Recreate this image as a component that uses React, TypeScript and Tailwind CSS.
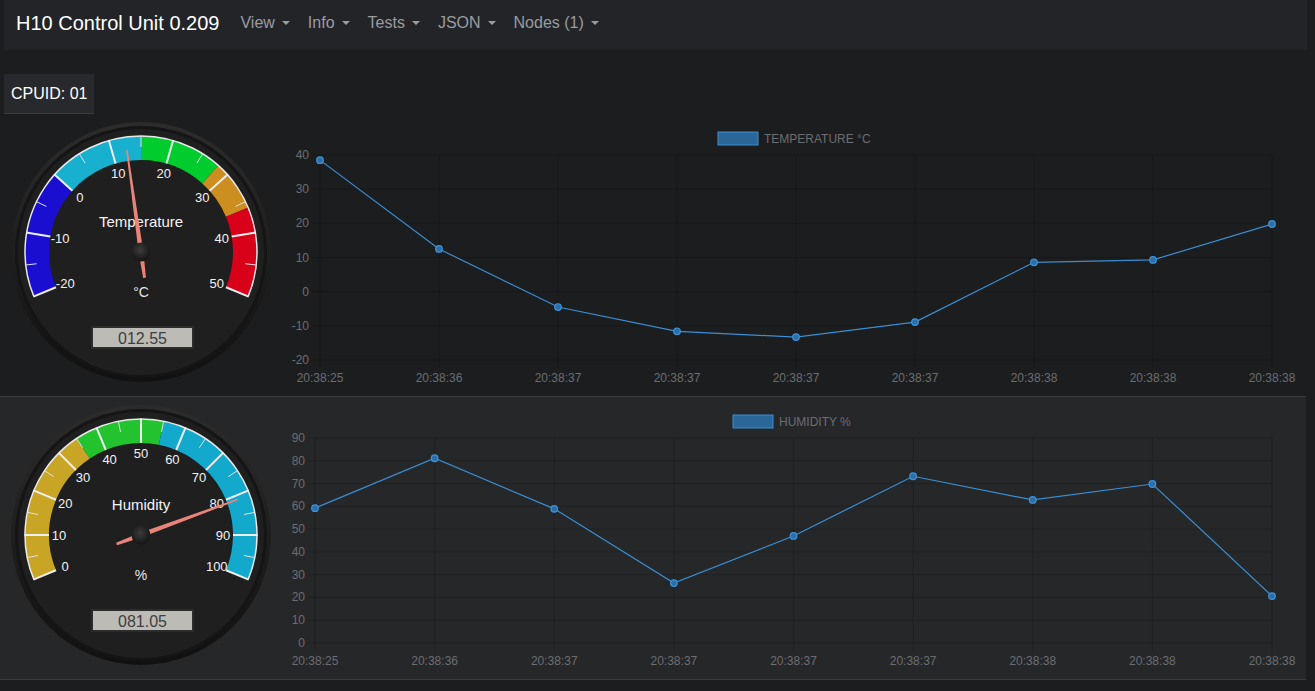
import React from "react";

type Band = { from: number; to: number; color: string };

interface GaugeProps {
  min: number;
  max: number;
  major: number;
  minor: number;
  bands: Band[];
  value: number;
  title: string;
  units: string;
  display: string;
}

const CX = 141;
const CY = 138;

function angleOf(v: number, min: number, max: number) {
  return ((-112.5 + ((v - min) / (max - min)) * 225) * Math.PI) / 180;
}

function pt(a: number, r: number) {
  return [CX + r * Math.sin(a), CY - r * Math.cos(a)];
}

function arcPath(a1: number, a2: number, r: number) {
  const [x1, y1] = pt(a1, r);
  const [x2, y2] = pt(a2, r);
  const large = a2 - a1 > Math.PI ? 1 : 0;
  return `M${x1} ${y1} A${r} ${r} 0 ${large} 1 ${x2} ${y2}`;
}

function Gauge({ min, max, major, minor, bands, value, title, units, display }: GaugeProps) {
  const majors: number[] = [];
  for (let v = min; v <= max + 0.001; v += major) majors.push(v);
  const minors: number[] = [];
  for (let v = min; v <= max + 0.001; v += minor) if (!majors.includes(v)) minors.push(v);

  const na = angleOf(value, min, max);
  const perp = na + Math.PI / 2;
  const side = (a: number, r: number, w: number) => {
    const [x, y] = pt(a, r);
    return [x + w * Math.sin(perp), y - w * Math.cos(perp)];
  };
  const needle = [
    side(na, 103, 0.8),
    side(na, 0, 2.4),
    side(na, -26, 1.4),
    side(na, -26, -1.4),
    side(na, 0, -2.4),
    side(na, 103, -0.8),
  ]
    .map((p) => p.join(","))
    .join(" ");

  return (
    <svg width="280" height="282" className="shrink-0">
      <defs>
        <radialGradient id={`hub-${title}`} cx="45%" cy="40%" r="60%">
          <stop offset="0%" stopColor="#3c3c3c" />
          <stop offset="100%" stopColor="#141414" />
        </radialGradient>
        <linearGradient id={`rim-${title}`} x1="0" y1="0" x2="0" y2="1">
          <stop offset="0%" stopColor="#2c2c2c" />
          <stop offset="100%" stopColor="#111111" />
        </linearGradient>
      </defs>
      <circle cx={CX} cy={CY} r="130" fill={`url(#rim-${title})`} />
      <circle cx={CX} cy={CY} r="126" fill="#151515" />
      <circle cx={CX} cy={CY} r="123" fill="#1f1f1f" />

      {bands.map((b) => (
        <path
          key={b.from}
          d={arcPath(angleOf(b.from, min, max), angleOf(b.to, min, max), 104)}
          stroke={b.color}
          strokeWidth="24"
          fill="none"
        />
      ))}
      <path
        d={arcPath(angleOf(min, min, max), angleOf(max, min, max), 116)}
        stroke="#e8e8e8"
        strokeWidth="1.5"
        fill="none"
      />
      {majors.map((v) => {
        const a = angleOf(v, min, max);
        const [x1, y1] = pt(a, 92);
        const [x2, y2] = pt(a, 116.5);
        return <line key={`M${v}`} x1={x1} y1={y1} x2={x2} y2={y2} stroke="#eeeeee" strokeWidth="2" />;
      })}
      {minors.map((v) => {
        const a = angleOf(v, min, max);
        const [x1, y1] = pt(a, 105);
        const [x2, y2] = pt(a, 116);
        return <line key={`m${v}`} x1={x1} y1={y1} x2={x2} y2={y2} stroke="#e0e0e0" strokeWidth="1" />;
      })}
      {majors.map((v) => {
        const [x, y] = pt(angleOf(v, min, max), 82);
        return (
          <text key={`l${v}`} x={x} y={y + 4.5} textAnchor="middle" fontSize="13" fill="#f2f2f2">
            {v}
          </text>
        );
      })}

      <text x={CX} y={CY - 25} textAnchor="middle" fontSize="15" fill="#f4f4f4">
        {title}
      </text>
      <text x={CX} y={CY + 45} textAnchor="middle" fontSize="14" fill="#e6e6e6">
        {units}
      </text>

      <rect x={CX - 50} y={CY + 74} width="103" height="23" fill="#2c2c2c" />
      <rect x={CX - 48} y={CY + 76} width="99" height="19" fill="#bcbbb6" />
      <text x={CX + 1.5} y={CY + 91.5} textAnchor="middle" fontSize="16" fill="#3e3e3e">
        {display}
      </text>

      <polygon points={needle} fill="#ea847b" />
      <circle cx={CX} cy={CY} r="9.5" fill={`url(#hub-${title})`} />
    </svg>
  );
}

interface ChartProps {
  label: string;
  legendX: number;
  legendY: number;
  data: number[];
  times: string[];
  yMin: number;
  yMax: number;
  yStep: number;
  top: number;
  bottom: number;
  left: number;
  right: number;
  tickRight: number;
}

// chart coordinates are relative to the chart svg, which starts at x=280
function LineChart({ label, legendX, legendY, data, times, yMin, yMax, yStep, top, bottom, left, right, tickRight }: ChartProps) {
  const yOf = (v: number) => top + ((yMax - v) / (yMax - yMin)) * (bottom - top);
  const step = (right - left) / (data.length - 1);
  const xOf = (i: number) => left + i * step;
  const ticks: number[] = [];
  for (let v = yMax; v >= yMin; v -= yStep) ticks.push(v);
  const line = data.map((v, i) => `${xOf(i)},${yOf(v)}`).join(" ");

  return (
    <svg width="1026" height="282" className="shrink-0" fontFamily="'Liberation Sans', Arial, sans-serif">
      <rect x={legendX} y={legendY} width="40" height="13" fill="#2b6699" stroke="#3a8fd4" strokeWidth="1" />
      <text x={legendX + 46} y={legendY + 11} fontSize="12" fill="#6b6e72">
        {label}
      </text>

      {ticks.map((v) => (
        <g key={v}>
          <line x1={left - 8} x2={right} y1={yOf(v)} y2={yOf(v)} stroke="rgba(0,0,0,0.17)" strokeWidth="1" />
          <text x={tickRight} y={yOf(v) + 4} textAnchor="end" fontSize="12" fill="#6b6e72">
            {v}
          </text>
        </g>
      ))}
      {data.map((_, i) => (
        <line key={i} x1={xOf(i)} x2={xOf(i)} y1={top} y2={bottom + 8} stroke="rgba(0,0,0,0.17)" strokeWidth="1" />
      ))}
      {times.map((t, i) => (
        <text key={i} x={xOf(i)} y={bottom + 22} textAnchor="middle" fontSize="12" fill="#6b6e72">
          {t}
        </text>
      ))}

      <polyline points={line} fill="none" stroke="#3a8fd4" strokeWidth="1.2" />
      {data.map((v, i) => (
        <circle key={i} cx={xOf(i)} cy={yOf(v)} r="3.3" fill="#2d6ea6" stroke="#3d93dc" strokeWidth="1.2" />
      ))}
    </svg>
  );
}

const times = [
  "20:38:25",
  "20:38:36",
  "20:38:37",
  "20:38:37",
  "20:38:37",
  "20:38:37",
  "20:38:38",
  "20:38:38",
  "20:38:38",
];

const temps = [38.5, 12.5, -4.5, -11.6, -13.3, -8.9, 8.6, 9.3, 19.8];
const hums = [59.2, 81.1, 58.9, 26.3, 47, 73.2, 62.8, 69.8, 20.6];

function NavItem({ children }: { children: React.ReactNode }) {
  return (
    <span className="flex items-center px-[9px] text-[16px] text-[#9a9ca0]">
      {children}
      <span className="ml-[7px] mt-[1px] h-0 w-0 border-x-[4px] border-t-[4.5px] border-x-transparent border-t-[#9a9ca0]" />
    </span>
  );
}

export default function App() {
  return (
    <div className="h-[691px] w-[1315px] overflow-hidden bg-[#1c1d1f] font-['Liberation_Sans',Arial,sans-serif]">
      <nav className="ml-1 flex h-[50px] w-[1303px] items-center bg-[#222428] pb-[5px] pl-3">
        <span className="mr-[12px] text-[20px] text-white">H10 Control Unit 0.209</span>
        <NavItem>View</NavItem>
        <NavItem>Info</NavItem>
        <NavItem>Tests</NavItem>
        <NavItem>JSON</NavItem>
        <NavItem>Nodes (1)</NavItem>
      </nav>

      <div className="ml-1 mt-6 flex h-10 w-fit items-center whitespace-nowrap border-b border-[#3a3b3e] bg-[#28292c] px-[7px] text-[16px] text-white">
        CPUID: 01
      </div>

      <div className="flex h-[283px] w-[1306px] border-b border-[#3a3b3e]">
        <Gauge
          min={-20}
          max={50}
          major={10}
          minor={5}
          bands={[
            { from: -20, to: 0, color: "#1a0fd0" },
            { from: 0, to: 15, color: "#17b1cf" },
            { from: 15, to: 28, color: "#00cc2e" },
            { from: 28, to: 36, color: "#cc8f1f" },
            { from: 36, to: 50, color: "#d9001a" },
          ]}
          value={12.55}
          title="Temperature"
          units="°C"
          display="012.55"
        />
        <LineChart
          label="TEMPERATURE °C"
          legendX={438}
          legendY={18}
          data={temps}
          times={times}
          yMin={-20}
          yMax={40}
          yStep={10}
          top={41}
          bottom={246}
          left={40}
          right={992}
          tickRight={29}
        />
      </div>

      <div className="flex h-[283px] w-[1306px] border-b border-[#3a3b3e] bg-[#262729]">
        <Gauge
          min={0}
          max={100}
          major={10}
          minor={5}
          bands={[
            { from: 0, to: 35, color: "#c9a526" },
            { from: 35, to: 55, color: "#23c22f" },
            { from: 55, to: 100, color: "#12a9cc" },
          ]}
          value={81.05}
          title="Humidity"
          units="%"
          display="081.05"
        />
        <LineChart
          label="HUMIDITY %"
          legendX={453}
          legendY={18}
          data={hums}
          times={times}
          yMin={0}
          yMax={90}
          yStep={10}
          top={41}
          bottom={246}
          left={35}
          right={992}
          tickRight={25}
        />
      </div>
    </div>
  );
}
